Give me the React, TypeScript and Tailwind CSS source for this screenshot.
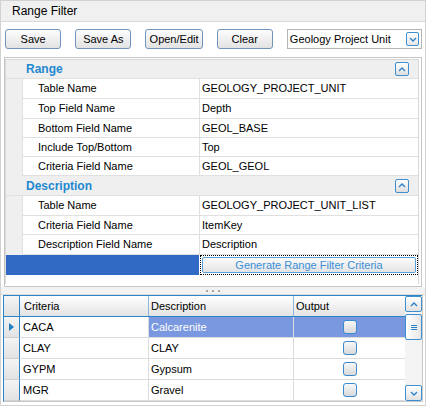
import React from 'react';

const rangeRows = [
  { label: 'Table Name', value: 'GEOLOGY_PROJECT_UNIT', h: 'h-[20px]' },
  { label: 'Top Field Name', value: 'Depth', h: 'h-[20px]' },
  { label: 'Bottom Field Name', value: 'GEOL_BASE', h: 'h-[19px]' },
  { label: 'Include Top/Bottom', value: 'Top', h: 'h-[19px]' },
  { label: 'Criteria Field Name', value: 'GEOL_GEOL', h: 'h-[19px]' },
];

const descRows = [
  { label: 'Table Name', value: 'GEOLOGY_PROJECT_UNIT_LIST', h: 'h-[20px]' },
  { label: 'Criteria Field Name', value: 'ItemKey', h: 'h-[19px]' },
  { label: 'Description Field Name', value: 'Description', h: 'h-[20px]' },
];

const gridRows = [
  { criteria: 'CACA', description: 'Calcarenite', selected: true },
  { criteria: 'CLAY', description: 'CLAY', selected: false },
  { criteria: 'GYPM', description: 'Gypsum', selected: false },
  { criteria: 'MGR', description: 'Gravel', selected: false },
];

function Caret({ down = false }: { down?: boolean }) {
  return (
    <svg width="8" height="5" viewBox="0 0 8 5">
      <polyline
        points={down ? '1,1 4,4 7,1' : '1,4 4,1 7,4'}
        fill="none"
        stroke="#2a7fc8"
        strokeWidth="1.3"
      />
    </svg>
  );
}

function SmallButton({ down = false }: { down?: boolean }) {
  return (
    <div className="w-[14px] h-[14px] rounded-[2px] border border-[#3d8fd1] bg-gradient-to-b from-white to-[#dedede] flex items-center justify-center">
      <Caret down={down} />
    </div>
  );
}

function ToolButton({ label, w }: { label: string; w: string }) {
  return (
    <button
      className={`${w} h-[20px] rounded-[3px] border border-[#6f94bd] bg-gradient-to-b from-[#fdfdfd] to-[#e2e2e2] text-[11px] text-black flex items-center justify-center`}
    >
      {label}
    </button>
  );
}

function SectionHeader({ title, h }: { title: string; h: string }) {
  return (
    <div className={`${h} flex items-center bg-[#efefef] border-b border-[#e0e0e0] pl-[20px] pr-[9px]`}>
      <span className="text-[12px] font-bold text-[#1f88d0]">{title}</span>
      <div className="ml-auto">
        <SmallButton />
      </div>
    </div>
  );
}

function PropRow({ label, value, h }: { label: string; value: string; h: string }) {
  return (
    <div className={`${h} flex`}>
      <div className="w-[16px] bg-[#efefef]" />
      <div className="w-[177px] border-l border-b border-[#e0e0e0] pl-[15px] flex items-center">{label}</div>
      <div className="flex-1 border-l border-b border-[#e0e0e0] pl-[2px] flex items-center">{value}</div>
    </div>
  );
}

function CheckBox() {
  return (
    <div className="w-[14px] h-[14px] rounded-[3px] border border-[#3b8ad0] bg-gradient-to-b from-[#f8f8f8] to-[#d9d9d9]" />
  );
}

export default function App() {
  return (
    <div className="w-[426px] h-[406px] overflow-hidden bg-white border border-[#d2d2d2] flex flex-col font-['Liberation_Sans',sans-serif] text-[11px] text-black">
      {/* Title */}
      <div className="h-[21px] shrink-0 bg-[#f0f0f0] border-b border-[#dadada] pl-[11px] flex items-center text-[12px]">
        Range Filter
      </div>

      {/* Toolbar */}
      <div className="shrink-0 flex items-center pt-[7px] pl-[4px] pr-[3px] gap-[14px]">
        <ToolButton label="Save" w="w-[57px]" />
        <ToolButton label="Save As" w="w-[57px]" />
        <ToolButton label="Open/Edit" w="w-[58px]" />
        <ToolButton label="Clear" w="w-[57px]" />
        <div className="ml-auto w-[137px] h-[20px] border border-[#b4b4b4] flex items-center pl-[2px] pr-[2px]">
          <span className="flex-1">Geology Project Unit</span>
          <div className="w-[13px] h-[14px] rounded-[2px] border border-[#3d8fd1] bg-gradient-to-b from-white to-[#e6e6e6] flex items-center justify-center">
            <Caret down />
          </div>
        </div>
      </div>

      {/* Property panel */}
      <div className="shrink-0 mt-[8px] mx-[3px] h-[230px] border border-[#c6c6c6] pt-[1px] pr-[2px] pb-[2px]">
        <div className="h-full border-t border-l border-r border-[#d8d8d8]">
          <SectionHeader title="Range" h="h-[19px]" />
          {rangeRows.map((r) => (
            <PropRow key={'r' + r.label} {...r} />
          ))}
          <SectionHeader title="Description" h="h-[20px]" />
          {descRows.map((r) => (
            <PropRow key={'d' + r.label} {...r} />
          ))}
          <div className="h-[20px] flex">
            <div className="w-[193px] bg-[#316ac5]" />
            <div className="flex-1 ml-[1px] border border-dotted border-black p-[1px]">
              <div className="h-full rounded-[2px] border border-[#5aa0d8] bg-gradient-to-b from-[#fbfbfb] to-[#e4e4e4] flex items-center justify-center text-[#3a8fd6]">
                Generate Range Filter Criteria
              </div>
            </div>
          </div>
        </div>
      </div>

      {/* Splitter */}
      <div className="shrink-0 h-[8px] bg-[#f2f2f2] border-b border-[#dcdcdc] flex items-center justify-center gap-[4px]">
        <div className="w-[2px] h-[2px] bg-[#a8a8a8]" />
        <div className="w-[2px] h-[2px] bg-[#a8a8a8]" />
        <div className="w-[2px] h-[2px] bg-[#a8a8a8]" />
      </div>

      {/* Grid */}
      <div className="shrink-0 ml-[2px] mr-[2px] h-[107px] flex border-l border-[#2a84c8] border-r border-r-[#c8c8c8] border-b border-b-[#c8c8c8]">
        <div className="flex-1 flex flex-col">
          <div className="h-[22px] flex border-t border-b border-[#2a84c8] bg-gradient-to-b from-white to-[#e3e3e3]">
            <div className="w-[16px] border-r border-[#2a84c8] bg-gradient-to-b from-[#f6f6f6] to-[#e0e0e0]" />
            <div className="w-[129px] border-r border-[#8cb8de] pl-[4px] flex items-center">Criteria</div>
            <div className="w-[145px] border-r border-[#8cb8de] pl-[2px] flex items-center">Description</div>
            <div className="flex-1 pl-[2px] flex items-center">Output</div>
          </div>
          {gridRows.map((row) => (
            <div key={row.criteria} className="h-[21px] flex">
              <div className="w-[16px] border-r border-[#2a84c8] border-b border-b-[#d0d0d0] bg-gradient-to-b from-[#f4f4f4] to-[#e2e2e2] flex items-center pl-[5px]">
                {row.selected && (
                  <svg width="5" height="8" viewBox="0 0 5 8">
                    <polygon points="0,0 5,4 0,8" fill="#1e7fc4" />
                  </svg>
                )}
              </div>
              <div className="w-[129px] border-r border-b border-[#dcdcdc] pl-[3px] flex items-center bg-white">
                {row.criteria}
              </div>
              <div
                className={`w-[145px] border-r border-b border-[#dcdcdc] pl-[2px] flex items-center ${
                  row.selected ? 'bg-[#7a98df] text-white' : 'bg-white'
                }`}
              >
                {row.description}
              </div>
              <div
                className={`flex-1 border-b border-[#dcdcdc] flex items-center justify-center ${
                  row.selected ? 'bg-[#7a98df]' : 'bg-white'
                }`}
              >
                <CheckBox />
              </div>
            </div>
          ))}
        </div>
        {/* Scrollbar */}
        <div className="w-[17px] bg-[#f4f4f4] flex flex-col border-t border-[#2a84c8]">
          <div className="h-[16px] rounded-[2px] border border-[#3d8fd1] bg-gradient-to-b from-white to-[#e2e2e2] flex items-center justify-center">
            <Caret />
          </div>
          <div className="mt-[2px] h-[26px] rounded-[2px] border border-[#3d8fd1] bg-gradient-to-r from-white to-[#e6e6e6] flex flex-col items-center justify-center gap-[1px]">
            <div className="w-[6px] h-[1px] bg-[#2a7fc8]" />
            <div className="w-[6px] h-[1px] bg-[#2a7fc8]" />
            <div className="w-[6px] h-[1px] bg-[#2a7fc8]" />
          </div>
          <div className="flex-1" />
          <div className="h-[16px] rounded-[2px] border border-[#3d8fd1] bg-gradient-to-b from-white to-[#e2e2e2] flex items-center justify-center">
            <Caret down />
          </div>
        </div>
      </div>
    </div>
  );
}
